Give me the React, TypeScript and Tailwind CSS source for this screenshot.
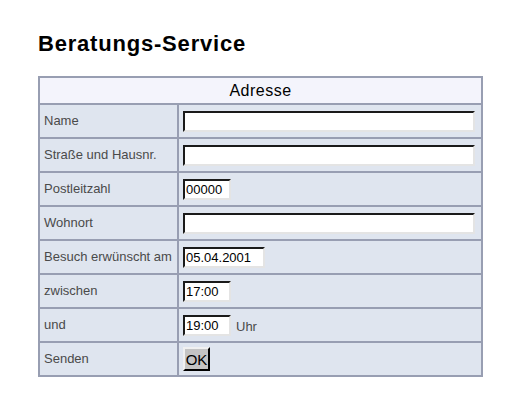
import React from 'react';

const rows: { label: string; kind: 'text' | 'ok'; value?: string; width?: string; suffix?: string }[] = [
  { label: 'Name', kind: 'text', value: '', width: 'w-[292px]' },
  { label: 'Straße und Hausnr.', kind: 'text', value: '', width: 'w-[292px]' },
  { label: 'Postleitzahl', kind: 'text', value: '00000', width: 'w-[48px]' },
  { label: 'Wohnort', kind: 'text', value: '', width: 'w-[292px]' },
  { label: 'Besuch erwünscht am', kind: 'text', value: '05.04.2001', width: 'w-[82px]' },
  { label: 'zwischen', kind: 'text', value: '17:00', width: 'w-[48px]' },
  { label: 'und', kind: 'text', value: '19:00', width: 'w-[48px]', suffix: 'Uhr' },
  { label: 'Senden', kind: 'ok' },
];

export default function App() {
  return (
    <div className="min-h-screen bg-white pl-[38px] pt-[31px] font-['Liberation_Sans',Arial,sans-serif]">
      <h1 className="text-[22px] font-bold leading-[26px] tracking-[0.8px] text-black">Beratungs-Service</h1>

      <div className="mt-[19px] w-[445px] border-2 border-[#989eb2] bg-[#989eb2]">
        <div className="flex h-[25px] items-center justify-center bg-[#f4f4fc] text-[16px] tracking-[0.5px] text-black">
          Adresse
        </div>
        <div className="mt-[2px] grid grid-cols-[137px_1fr] gap-[2px]">
          {rows.map(row => (
            <React.Fragment key={row.label}>
              <div className="flex h-[32px] items-center bg-[#dfe5ef] pl-[4px] text-[13px] text-[#4a4a4a]">
                {row.label}
              </div>
              <div className="flex h-[32px] items-center bg-[#dfe5ef] pl-[4px]">
                {row.kind === 'text' ? (
                  <>
                    <input
                      defaultValue={row.value}
                      className={`${row.width} h-[21px] border-2 border-t-[#1a1a1a] border-l-[#1a1a1a] border-r-[#e4e4e4] border-b-[#e4e4e4] bg-white px-[1px] text-[13px] text-black outline-none`}
                    />
                    {row.suffix && <span className="ml-[5px] mt-[3px] text-[13px] text-[#4a4a4a]">{row.suffix}</span>}
                  </>
                ) : (
                  <button className="h-[24px] w-[27px] border-2 border-t-[#f0f0f0] border-l-[#f0f0f0] border-r-black border-b-black bg-[#c4c4c4] text-[15px] leading-none text-black">
                    OK
                  </button>
                )}
              </div>
            </React.Fragment>
          ))}
        </div>
      </div>
    </div>
  );
}
